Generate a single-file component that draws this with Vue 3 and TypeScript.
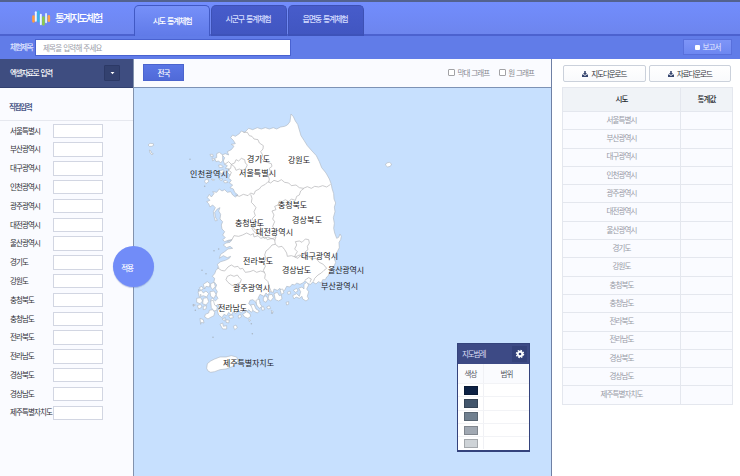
<script setup lang="ts">
interface MapLabel { name: string; x: number; y: number; width: number }

const regions: string[] = [
  '서울특별시', '부산광역시', '대구광역시', '인천광역시', '광주광역시', '대전광역시',
  '울산광역시', '경기도', '강원도', '충청북도', '충청남도', '전라북도', '전라남도',
  '경상북도', '경상남도', '제주특별자치도',
]

const labels: MapLabel[] = [
  { name: '경기도', x: 247, y: 161.8, width: 23 },
  { name: '강원도', x: 288, y: 162.8, width: 22 },
  { name: '인천광역시', x: 190, y: 176.8, width: 38 },
  { name: '서울특별시', x: 239, y: 175.8, width: 37 },
  { name: '충청북도', x: 278, y: 207.8, width: 29 },
  { name: '경상북도', x: 292, y: 222.6, width: 30 },
  { name: '충청남도', x: 235, y: 225.8, width: 29 },
  { name: '대전광역시', x: 256, y: 234.6, width: 37 },
  { name: '전라북도', x: 243, y: 264, width: 30 },
  { name: '대구광역시', x: 301, y: 258.8, width: 37 },
  { name: '경상남도', x: 282, y: 272.8, width: 29 },
  { name: '울산광역시', x: 328, y: 272.6, width: 36 },
  { name: '부산광역시', x: 321, y: 288.8, width: 37 },
  { name: '광주광역시', x: 233, y: 291, width: 37 },
  { name: '전라남도', x: 218, y: 310.8, width: 29 },
  { name: '제주특별자치도', x: 223, y: 366.4, width: 51 },
]

// Map outlines are drawn on a grid three times finer than the page's pixels.
const coast =
  'M333 27L340 35 346 48 353 58 358 75 363 92 372 106 382 122 396 138 409 152 418 170 425 188 438 204 448 222 454 238 456 250 461 266 462 282 467 294 463 306 465 320 460 338 463 355 461 370 464 384 470 400 476 397 480 387 484 394 482 404 477 412 478 428 472 440 466 448 463 462 467 472 462 484 455 490 449 500 445 512 440 516 436 524 428 524 424 534 415 530 408 537 398 531 392 538 384 536 376 528 368 534 360 538 350 534 344 540 336 538 330 546 320 544 314 556 306 560 300 550 292 556 282 552 280 562 270 560 264 570 258 564 252 574 240 568 234 580 240 592 232 602 226 590 218 584 210 586 206 596 214 602 222 612 214 622 206 614 200 622 190 616 184 624 174 616 168 626 160 620 154 630 146 622 140 632 132 628 126 638 116 630 112 618 120 608 114 598 106 604 96 594 92 584 98 580 106 588 114 580 108 570 112 560 106 550 110 540 102 530 104 520 97 514 104 506 108 496 116 488 112 478 122 470 136 466 148 460 152 454 142 458 130 452 118 460 122 448 134 440 144 432 158 430 150 424 140 428 130 420 138 414 150 412 156 404 144 406 134 410 128 404 136 398 128 390 134 380 126 372 124 360 128 350 120 342 122 328 116 318 120 308 112 312 104 322 106 336 112 346 106 348 102 334 100 320 106 308 98 300 90 306 86 296 80 290 90 286 82 278 88 268 94 276 102 266 98 260 110 262 118 252 126 258 134 254 142 262 152 260 158 270 166 276 174 270 164 262 160 252 150 248 158 240 148 234 154 226 146 220 150 210 142 202 148 192 136 190 142 182 134 178 130 168 134 158 126 150 136 146 146 150 142 140 154 134 162 124 154 118 166 116 160 106 152 98 158 90 166 94 178 86 184 78 194 82 206 70 218 74 232 68 244 72 256 68 268 72 280 68 290 72 302 66 314 64 322 60 330 50Z'

const borders: string[] = [
  'M190 82L202 82 208 92 216 94 222 102 234 104 238 114 250 122 249 132 242 140 248 150 244 160 252 168 262 172 274 176 276 184 268 190 272 202 264 212 268 222 266 232',
  'M166 270L178 274 190 268 204 272 212 264 222 268 226 258 238 252 244 244 256 238 264 230 272 234 282 226 294 230 304 224 314 232 326 234 334 242 348 240 358 248 370 250 382 245 394 250 404 244 416 246 428 242 440 246 452 238',
  'M372 250L362 258 358 270 350 274 346 286 334 282 326 290 316 284 306 290 298 288 294 300 284 304 288 314 276 318 282 330 278 342 284 350 278 364 284 374 282 388 288 396 284 406 286 418',
  'M212 268L216 280 214 292 222 300 228 308 222 320 226 332 216 342 222 350 218 362 224 374 232 376 234 388 246 390 252 400 264 396 276 402 284 398',
  'M142 410L156 404 162 392 176 394 188 390 200 384 212 390 220 386 222 396 234 392 242 400 254 396 262 404 276 400 286 406',
  'M286 418L276 420 268 430 258 438 254 450 258 460 252 472 256 484 250 496 256 508 254 520 264 530 268 546 274 560',
  'M286 418L296 426 306 424 314 434 320 444 322 454 334 452 346 456 358 450 372 460 384 454 396 462 408 460 418 472 430 478 440 490',
  'M112 488L124 496 134 498 144 486 154 480 164 486 174 484 180 492 188 490 196 502 210 500 220 496 230 502 242 498 254 502',
  'M138 524L142 514 152 510 162 514 172 510 178 518 184 524 180 534 172 536 166 544 154 540 144 532Z',
  'M154 178L164 174 168 164 176 168 184 160 194 164 196 174 202 180 196 192 186 196 178 192 168 196 164 186Z',
  'M134 178L146 170 154 178 152 190 144 194 154 202 150 212',
  'M346 450L352 440 344 432 350 420 346 410 358 408 366 412 376 402 386 404 388 414 382 424 384 434 376 440 370 452 362 450 354 460 344 456Z',
  'M440 490L432 496 424 504 414 510 404 520 400 530M390 532L394 522 386 518 374 526',
  'M216 370L222 358 232 352 236 362 242 366 240 380 230 386 222 380Z',
]

const islands: string[] = [
  'M110 146L118 142 128 150 128 166 122 174 116 168 108 170 104 160 110 158Z',
  'M90 148L98 148 100 154 92 154Z', 'M96 158L104 164 98 168Z', 'M116 180L124 180 130 186 118 188Z',
  'M118 198L130 194 134 202 122 206Z', 'M76 224L84 222 86 230 78 236 74 230Z', 'M94 222L104 224 100 228Z',
  'M118 222L128 222 124 228Z', 'M130 228L138 226 144 232 134 234Z',
  'M70 538L82 530 90 536 88 546 78 544 74 552Z', 'M92 536L102 532 106 544 98 554 92 546Z',
  'M58 548L66 544 70 552 62 556Z', 'M54 560L64 556 70 564 78 558 86 566 80 576 70 572 58 576Z',
  'M90 560L102 558 108 568 102 580 92 574Z', 'M50 580L62 578 68 588 60 596 50 592Z',
  'M70 580L82 578 86 590 78 600 68 596Z', 'M52 602L62 598 66 606 56 612Z', 'M70 604L80 602 78 612 70 614Z',
  'M92 588L100 586 104 600 112 606 110 616 102 618 94 608Z',
  'M76 628L86 624 88 616 98 614 104 622 102 632 90 638 84 642 74 636Z',
  'M60 640L70 644 72 654 64 652 62 658Z', 'M40 598L46 600 40 604Z',
  'M126 642L136 638 134 648Z', 'M120 658L128 654 130 664 140 662 140 672 128 672Z',
  'M138 644L148 646 146 654 138 652Z', 'M146 632L158 630 160 638 150 640Z',
  'M160 664L168 660 172 668 164 674Z', 'M174 632L182 628 184 636 176 640Z',
  'M188 628L200 620 210 626 212 634 204 640 194 636Z', 'M206 644L212 646 208 650Z',
  'M212 600L222 598 228 612 238 618 232 624 220 618Z', 'M228 586L238 582 240 596 246 604 238 610 230 600Z',
  'M244 608L250 604 254 614 246 616Z', 'M250 578L258 572 264 582 258 592 250 588Z',
  'M266 570L276 568 280 578 272 588 264 582Z', 'M260 606L268 602 272 610 264 612Z', 'M274 616L280 620 276 626Z',
  'M282 566L292 562 298 572 304 570 306 582 296 588 286 584Z', 'M300 554L308 552 312 564 304 568Z',
  'M318 592L326 590 326 598 320 600Z', 'M322 562L330 558 332 566 324 568Z',
  'M340 556L350 550 354 558 346 562Z', 'M338 572L350 566 358 574 362 560 356 550 366 546 372 552 372 538 380 532 386 540 380 552 386 560 382 574 386 582 378 588 368 582 366 574 358 580 348 576 342 582Z',
]

const specks: [number, number][] = [
  [30, 163], [74, 244], [102, 437], [116, 432], [66, 496], [78, 506], [56, 555],
  [40, 600], [99, 697], [217, 686], [214, 656], [62, 570], [276, 624], [46, 616],
]

const scale: string[] = ['#0c2144', '#43566c', '#6f7f8f', '#a0a8b2', '#ced3d7']
</script>

<template>
  <div class="app">
    <header class="top">
      <div class="brand">
        <svg class="logo" viewBox="0 0 20 18" fill="none" stroke-linecap="round">
          <path d="M1.600 7.500v5" stroke="#ff9b42" stroke-width="2.800" />
          <path d="M4 3v9" stroke="#e8f6ff" stroke-width="2" />
          <path d="M6.700 2.500v10" stroke="#35b4e9" stroke-width="2.600" />
          <path d="M9.300 5.500v10" stroke="#e9f7ff" stroke-width="2" />
          <path d="M12 8.500v7.200" stroke="#8cc94b" stroke-width="2.800" />
          <path d="M14.800 4.800v8.700" stroke="#d9f1ff" stroke-width="2" />
          <path d="M17.700 7.300v4.500" stroke="#ffa14a" stroke-width="2.800" />
        </svg>
        <h1>통계지도체험</h1>
      </div>
      <nav class="tabs">
        <a class="tab active">시도 통계체험</a>
        <a class="tab">시군구 통계체험</a>
        <a class="tab">읍면동 통계체험</a>
      </nav>
    </header>

    <div class="titlebar">
      <label>체험제목</label>
      <input type="text" placeholder="제목을 입력해 주세요" />
      <button class="report"><i></i>보고서</button>
    </div>

    <main class="body">
      <aside class="side">
        <div class="excel">
          <span>엑셀자료로 입력</span>
          <b class="drop"><svg viewBox="0 0 6 4"><path d="M.7.7h4.6L3 3.4z" fill="#fff" /></svg></b>
        </div>
        <h2>직접입력</h2>
        <ul>
          <li v-for="r in regions" :key="r"><span>{{ r }}</span><input type="text" /></li>
        </ul>
        <button class="apply">적용</button>
      </aside>

      <section class="center">
        <div class="tools">
          <button class="nation">전국</button>
          <label class="check first"><i></i>막대 그래프</label>
          <label class="check"><i></i>원 그래프</label>
        </div>
        <div class="map">
          <svg class="korea" viewBox="134 88 417 388">
            <g transform="translate(180 105) scale(.33333)">
              <g class="land">
                <path :d="coast" />
                <path v-for="d in islands" :key="d" :d="d" />
                <path d="M80 790L82 776 92 768 104 762 120 756 138 756 154 752 170 756 174 766 166 778 154 786 138 792 120 794 104 800 92 802 84 798Z" />
                <path d="M-96 120L-90 115 -80 116 -79 121 -85 124 -92 124Z" />
                <path d="M-92 135L-87 138 -86 144 -80 146 -84 150 -90 144Z" />
                <path d="M616 180L620 174 628 172 635 177 631 184 623 186Z" />
              </g>
              <g class="border"><path v-for="d in borders" :key="d" :d="d" /></g>
              <circle v-for="([x, y], i) in specks" :key="i" class="speck" :cx="x" :cy="y" r="2.3" />
            </g>
            <text
              v-for="l in labels" :key="l.name" :x="l.x" :y="l.y"
              :textLength="l.width" lengthAdjust="spacing"
            >{{ l.name }}</text>
          </svg>
          <div class="legend">
            <div class="legend-head">
              <span>지도범례</span>
              <b>
                <svg viewBox="0 0 12 12">
                  <circle cx="6" cy="6" r="2.700" fill="none" stroke="#fff" stroke-width="2.200" />
                  <circle cx="6" cy="6" r="4.300" fill="none" stroke="#fff" stroke-width="1.500" stroke-dasharray="1.890 1.490" />
                </svg>
              </b>
            </div>
            <div class="legend-row names"><span>색상</span><span>범위</span></div>
            <div v-for="c in scale" :key="c" class="legend-row">
              <span><i :style="{ background: c }"></i></span><span></span>
            </div>
          </div>
        </div>
      </section>

      <aside class="data">
        <div class="downloads">
          <button v-for="t in ['지도다운로드', '자료다운로드']" :key="t">
            <svg viewBox="0 0 6 6"><path d="M2.200 0h1.600v2H5L3 4.200 1 2h1.200zM0 3.600h1.200L3 5l1.800-1.400H6V6H0z" fill="#37466f" /></svg>{{ t }}
          </button>
        </div>
        <table>
          <thead><tr><th class="name">시도</th><th>통계값</th></tr></thead>
          <tbody><tr v-for="r in regions" :key="r"><td>{{ r }}</td><td></td></tr></tbody>
        </table>
      </aside>
    </main>
  </div>
</template>

<style>
body { overflow: hidden; }
</style>

<style scoped>
* { box-sizing: border-box; }
.app {
  width: 740px; height: 476px; display: flex; flex-direction: column; overflow: hidden;
  font-family: "Noto Sans CJK KR", sans-serif; font-size: 7.5px; line-height: 1; background: #fff;
}
button, input { font: inherit; margin: 0; padding: 0; border: 0; border-radius: 0; outline: 0; }
h1, h2, ul { margin: 0; padding: 0; list-style: none; }

.top {
  height: 36px; flex: none; display: flex; align-items: flex-end;
  border-top: 2px solid #53628f; border-bottom: 2px solid #4c62cf;
  background: linear-gradient(#728dfd, #6d85ee);
}
.brand { width: 134px; height: 32px; padding-left: 32px; display: flex; align-items: center; gap: 4px; }
.logo { width: 19px; height: 18px; }
h1 { font-size: 10.5px; font-weight: 500; letter-spacing: -1.9px; color: #fff; white-space: nowrap; padding-top: 1px; }
.tabs { display: flex; gap: 1px; margin-bottom: -2px; }
.tab {
  height: 31px; width: 76px; display: flex; align-items: center; justify-content: center;
  color: #d4dcff; font-weight: 500; font-size: 8px; letter-spacing: -1.25px; word-spacing: 1.5px;
  background: linear-gradient(#475ccb, #4156c1); border: 1px solid #3d51b5; border-bottom: 2px solid #3d52b9;
  border-radius: 5px 5px 0 0; padding: 0 2px 2px 0;
}
.tab.active {
  color: #fff; background: linear-gradient(#7690f9, #607ae8);
  border: 1px solid #4159c4; border-bottom: 0; padding: 0 0 1px;
}

.titlebar {
  height: 23px; flex: none; display: flex; align-items: center; padding: 0 8px 1px 10px;
  background: #617ce8;
}
.titlebar label { width: 25px; color: #e2e8ff; font-weight: 500; letter-spacing: -1.35px; white-space: nowrap; }
.titlebar input {
  width: 256px; height: 17px; padding-left: 7px; background: #fff; border: 1px solid #4962d0;
  letter-spacing: -.8px; word-spacing: 1px; color: #666;
}
.titlebar input::placeholder { color: #9a9da8; opacity: 1; }
.report {
  margin-left: auto; width: 49px; height: 16px; display: flex; align-items: center; justify-content: center; gap: 3px;
  color: #e7ecff; background: linear-gradient(#7e95f8, #6d87f1); border: 1px solid #5870dc; letter-spacing: -.9px;
}
.report i { width: 5px; height: 5px; background: #fff; border-radius: 1px; }

.body { flex: 1; min-height: 0; display: flex; }
.side { position: relative; width: 134px; flex: none; border-right: 1px solid #8292ad; background: #fafbff; }
.excel {
  height: 29px; width: 133px; padding: 0 13px 1px 10px; display: flex; align-items: center; justify-content: space-between;
  color: #fff; font-weight: 500; letter-spacing: -1.2px; word-spacing: 1.5px; background: #3e4d80; border-bottom: 1px solid #31406f;
}
.drop {
  width: 16px; height: 16px; display: flex; align-items: center; justify-content: center;
  background: #33416f; border: 1px solid #2c3966; border-radius: 1px;
}
.drop svg { width: 5px; height: 4px; }
h2 {
  height: 33px; padding: 15px 0 0 9px; font-size: 7.5px; font-weight: 700; letter-spacing: -1.35px;
  color: #4a5788; border-bottom: 1px solid #e6e8ef;
}
.side ul { padding: .4px 0 0 10px; }
.side li { height: 18.8px; display: flex; align-items: center; }
.side li span { width: 43px; flex: none; color: #303238; letter-spacing: -.9px; white-space: nowrap; padding-bottom: 1px; }
.side li input { width: 50px; height: 14.3px; background: #fff; border: 1px solid #d2d6e2; }
.apply {
  position: absolute; z-index: 2; left: 113px; top: 187px; width: 41px; height: 41px; border-radius: 50%;
  background: #718cf8; color: #fff; font-weight: 500; letter-spacing: -1.2px; padding: 2px 13px 0 0;
  box-shadow: 0 1px 1px #6276b866;
}

.center { width: 418px; flex: none; display: flex; flex-direction: column; border-right: 1px solid #6f80a4; }
.tools {
  height: 29px; flex: none; display: flex; align-items: center; padding: 0 17px 1px 9px; background: #fafbff;
  border-bottom: 1px solid #7d92b5; color: #85878f; letter-spacing: -.9px; word-spacing: 1px;
}
.nation {
  width: 41px; height: 17px; color: #fff; font-weight: 500; letter-spacing: -.8px;
  background: linear-gradient(#5a76e5, #506ad8); border: 1px solid #4b64ce;
}
.check { display: flex; align-items: center; gap: 2px; white-space: nowrap; margin-left: 10px; }
.check.first { margin-left: auto; }
.check i { width: 7px; height: 7px; border: 1px solid #a2a2a5; background: #fff; border-radius: 1px; }

.map { position: relative; flex: 1; min-height: 0; background: #c7e0fe; }
.korea { display: block; width: 417px; height: 388px; }
.land path { fill: #fff; stroke: #b0b8c2; stroke-width: 1.9; stroke-linejoin: round; }
.border path { fill: none; stroke: #b3b3b6; stroke-width: 2.1; }
.speck { fill: #a9b5c3; }
.korea text { font-size: 8px; fill: #1c1c1e; }

.legend {
  position: absolute; left: 323px; top: 255px; width: 73px; height: 109px;
  border: 1px solid #34437c; border-bottom-width: 2px; background: #fff;
}
.legend-head {
  height: 20px; padding: 0 2px 0 4px; display: flex; align-items: center; justify-content: space-between;
  color: #d9def5; background: #3d4a85; letter-spacing: -1.1px;
}
.legend-head b { width: 15px; height: 16px; display: flex; align-items: center; justify-content: center; background: #35427a; }
.legend-head svg { width: 10px; height: 10px; }
.legend-row { height: 13.3px; display: flex; border-top: 1px solid #f2f3f6; }
.legend-row span { flex: 1; display: flex; align-items: center; justify-content: center; }
.legend-row span:first-child { flex: none; width: 26px; border-right: 1px solid #f0f1f5; }
.legend-row i { width: 14px; height: 9px; border: 1px solid #0003; }
.legend-row.names { height: 19px; background: #fafbfe; color: #55575e; letter-spacing: -1px; border: 0; }

.data { flex: 1; padding: 6px 7px 0 9px; background: #fff; }
.downloads { display: flex; gap: 3px; padding: 0 2px 0 2px; }
.downloads button {
  flex: 1; height: 17px; display: flex; align-items: center; justify-content: center; gap: 3px;
  background: linear-gradient(#fff, #f9fafc); border: 1px solid #cbd1db; border-radius: 2px;
  color: #34363d; letter-spacing: -1.05px; white-space: nowrap;
}
.downloads svg { width: 6px; height: 6px; }
table { width: 171px; margin: 5px 0 0 1px; border-collapse: collapse; table-layout: fixed; }
th, td { padding: 0 0 2px; border: 1px solid #e4e7ee; text-align: center; letter-spacing: -.9px; font-weight: 400; }
th { height: 24px; background: #f0f3f7; color: #26282d; font-weight: 500; }
th.name { width: 118px; }
td { height: 18.3px; background: #fafbff; color: #989aa6; }
</style>
